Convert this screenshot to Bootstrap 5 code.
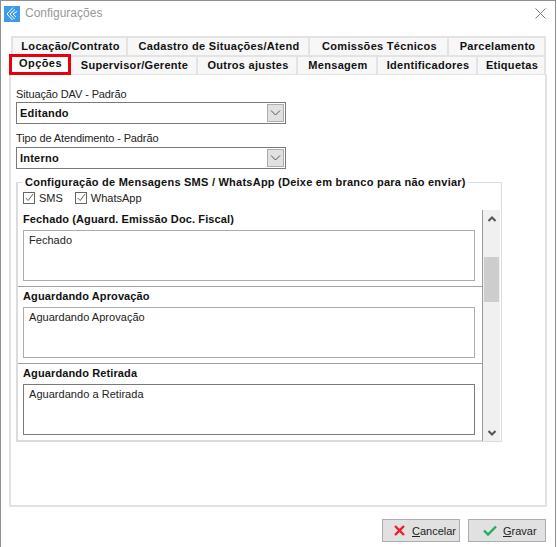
<!DOCTYPE html>
<html lang="pt"><head><meta charset="utf-8"><title>Configurações</title>
<link href="https://cdn.jsdelivr.net/npm/bootstrap@5.3.0/dist/css/bootstrap.min.css" rel="stylesheet">
<style>
html,body{margin:0;height:547px;overflow:hidden;background:#fff}
body{font-family:"Liberation Sans",Arial,sans-serif;font-size:11px;color:#000;line-height:13px}
.win{width:556px;height:547px;border:1px solid #8f8f8f;border-width:1px 1px 0 1px;background:#fff;display:flex;flex-direction:column}
.titlebar{height:26px;padding:4px 8px 0 3px;gap:5px;font-size:12px;color:#999;line-height:17px}
.appico{width:16px;height:16px;background:#3d9be9;flex:none;margin-top:1px}
.xclose{margin-left:auto;margin-right:1px;margin-top:3px}
.tabs{margin:9px 0 0 10px;width:535px}
.tabrow{height:19px;flex-wrap:nowrap;border:0}
.wtab{border:2px solid #e3e3e3;border-bottom-width:0;border-left-width:0;background:#f7f7f7;font-weight:700;font-size:11px;letter-spacing:.3px;line-height:17px;text-align:center;color:#111;padding-left:2px}
.wtab:first-child{border-left-width:2px}
.t1{width:117px}.t2{width:182px}.t3{width:139px}.t4{width:97px}
.t5{width:60px;border:0;background:#fff;position:relative;padding:0;letter-spacing:.42px}
.t6{width:127px}.t7{width:100px}.t8{width:80px}.t9{width:100px}.t10{width:68px}
.redbox{position:absolute;left:-2px;top:-1px;width:62px;height:21px;border:3px solid #e8000d;line-height:12px;z-index:2;padding-left:1px}
.panel{margin:0 0 0 8px;width:538px;height:433px;border:2px solid #e3e3e3;border-top-width:1px;padding:13px 5px 0 5px;background:#fff}
.flabel{color:#222;letter-spacing:-.12px;height:14px;line-height:13px}
.flabel2{height:15px}
.combo{width:270px;height:22px;border:1px solid #7a7a7a;margin-bottom:8px;font-weight:700;font-size:11px;letter-spacing:.22px;padding:1px 1px 1px 3px;color:#111}
.comboarrow{width:17px;background:#e1e1e1;border:1px solid #adadad;margin-left:auto}
.combotxt{line-height:18px}
.gbox{width:486px;height:260px;border:2px solid #dcdcdc;border-top-width:1px;border-right-width:1px;position:relative;margin-top:13px}
.glegend{position:absolute;left:5px;top:-7px;background:#fff;padding:0 2px;font-weight:700;letter-spacing:.24px;color:#111;white-space:nowrap;line-height:13px}
.chkrow{padding:9px 0 0 5px;gap:8px;height:27px}
.chk{gap:4px;color:#222;line-height:12px}
.chkbox{width:12px;height:12px;border:1px solid #666;flex:none;display:block}
.chk.lbl2{margin-left:4px}
.msgarea{height:231px}
.msgs{width:466px;border-right:1px solid #9a9a9a;overflow:hidden}
.msg{height:77px;border-bottom:1px solid #a0a0a0;padding:2px 0 0 5px}
.msg:last-child{border-bottom:0}
.msgtitle{font-weight:700;letter-spacing:.12px;line-height:13px;height:14px;color:#111;margin-top:1px}
.msgtxt{display:block;width:452px;height:51px;padding:3px 5px;border:1px solid #acacac;border-radius:0;font-size:11px;line-height:13px;color:#222;letter-spacing:.04px;resize:none;margin-top:3px;font-family:inherit;outline:0;overflow:hidden}
.msg:last-child .msgtxt{border-color:#7a7a7a}
.sbar{width:18px;background:#f0f0f0;padding:0 1px;border-right:1px solid #fff}
.sarrow{height:17px;flex:none}
.sthumb{height:45px;background:#cdcdcd;margin-top:30px}
.foot{padding:12px 9px 0 0;gap:8px}
.fbtn{width:78px;height:23px;padding:0;border:1px solid #adadad;border-radius:0;background:#e1e1e1;color:#222;font-size:11px;line-height:20px;display:flex;align-items:center;justify-content:flex-start;gap:7px}
.fbtn:hover{background:#e1e1e1;color:#222;border-color:#adadad}
.fbtn-x{padding-left:11px}
.fbtn-ok{padding-left:14px;gap:6px}
.fbtn u{text-decoration:underline}
</style></head><body>
<div class="win">
 <div class="titlebar d-flex">
  <span class="appico d-block"><svg width="16" height="16" viewBox="0 0 16 16" class="d-block"><path d="M9 1.500 3 8l5.500 6M11 3.500 6 8l4.500 5M13 5.500 9 8l3 3" fill="none" stroke="#fff" stroke-width="1"/></svg></span>
  <span>Configurações</span>
  <svg class="xclose" width="11" height="11" viewBox="0 0 11 11"><path d="M.5.500l10 10M10.500.500l-10 10" stroke="#777" stroke-width="1" fill="none"/></svg>
 </div>
 <div class="tabs">
  <ul class="nav tabrow">
   <li class="wtab t1">Locação/Contrato</li><li class="wtab t2">Cadastro de Situações/Atend</li><li class="wtab t3">Comissões Técnicos</li><li class="wtab t4">Parcelamento</li>
  </ul>
  <ul class="nav tabrow">
   <li class="wtab t5"><div class="redbox">Opções</div></li><li class="wtab t6">Supervisor/Gerente</li><li class="wtab t7">Outros ajustes</li><li class="wtab t8">Mensagem</li><li class="wtab t9">Identificadores</li><li class="wtab t10">Etiquetas</li>
  </ul>
 </div>
 <div class="panel">
  <div class="flabel">Situação DAV - Padrão</div>
  <div class="combo d-flex"><span class="combotxt">Editando</span><span class="comboarrow d-flex align-items-center justify-content-center"><svg width="11" height="6" viewBox="0 0 11 6"><path d="M1 .5l4.500 4.500L10 .5" fill="none" stroke="#555"/></svg></span></div>
  <div class="flabel flabel2">Tipo de Atendimento - Padrão</div>
  <div class="combo d-flex"><span class="combotxt">Interno</span><span class="comboarrow d-flex align-items-center justify-content-center"><svg width="11" height="6" viewBox="0 0 11 6"><path d="M1 .5l4.500 4.500L10 .5" fill="none" stroke="#555"/></svg></span></div>
  <div class="gbox">
   <div class="glegend">Configuração de Mensagens SMS / WhatsApp (Deixe em branco para não enviar)</div>
   <div class="chkrow d-flex">
    <label class="chk d-flex"><svg class="chkbox" viewBox="0 0 12 12"><path d="M2 6l3 3 6-8" fill="none" stroke="#444"/></svg>SMS</label>
    <label class="chk lbl2 d-flex"><svg class="chkbox" viewBox="0 0 12 12"><path d="M2 6l3 3 6-8" fill="none" stroke="#444"/></svg>WhatsApp</label>
   </div>
   <div class="msgarea d-flex">
    <div class="msgs">
     <div class="msg"><div class="msgtitle">Fechado (Aguard. Emissão Doc. Fiscal)</div><textarea class="msgtxt" readonly>Fechado</textarea></div>
     <div class="msg"><div class="msgtitle">Aguardando Aprovação</div><textarea class="msgtxt" readonly>Aguardando Aprovação</textarea></div>
     <div class="msg"><div class="msgtitle">Aguardando Retirada</div><textarea class="msgtxt" readonly>Aguardando a Retirada</textarea></div>
    </div>
    <div class="sbar d-flex flex-column">
     <div class="sarrow d-flex align-items-center justify-content-center"><svg width="8" height="6" viewBox="0 0 8 6"><path d="M.5 5 4 1.500 7.500 5" fill="none" stroke="#555" stroke-width="2"/></svg></div>
     <div class="sthumb"></div>
     <div class="sarrow mt-auto d-flex align-items-center justify-content-center"><svg width="8" height="6" viewBox="0 0 8 6"><path d="M.5 1 4 4.500 7.500 1" fill="none" stroke="#555" stroke-width="2"/></svg></div>
    </div>
   </div>
  </div>
 </div>
 <div class="foot d-flex justify-content-end">
  <button class="btn fbtn fbtn-x" type="button"><svg width="11" height="11" viewBox="0 0 11 11"><path d="M1 1l9 9M10 1l-9 9" stroke="#ee1c32" stroke-width="2.400" fill="none"/></svg><span><u>C</u>ancelar</span></button>
  <button class="btn fbtn fbtn-ok" type="button"><svg width="14" height="11" viewBox="0 0 14 11"><path d="M1 5.500l4 4 8-8" stroke="#1fae5a" stroke-width="2.400" fill="none"/></svg><span><u>G</u>ravar</span></button>
 </div>
</div>
</body></html>
